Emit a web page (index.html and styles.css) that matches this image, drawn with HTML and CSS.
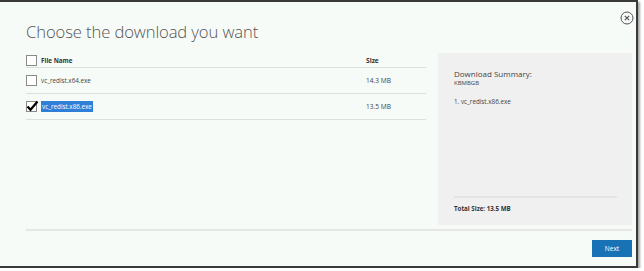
FILE: index.html
```html
<!DOCTYPE html>
<html>
<head>
<meta charset="utf-8">
<link rel="stylesheet" href="styles.css">
</head>
<body>
<div class="window">
  <div class="head">
    <h1 class="title">Choose the download you want</h1>
    <button class="close" aria-label="Close">
      <svg width="14" height="14" viewBox="0 0 14 14"><circle cx="7" cy="7" r="6" fill="none" stroke="#555" stroke-width="1"/><path d="M4.8 4.8 L9.2 9.2 M9.2 4.8 L4.8 9.2" stroke="#555" stroke-width="1.2" fill="none"/></svg>
    </button>
  </div>
  <div class="main">
    <div class="files">
      <div class="row header">
        <span class="cb"></span>
        <span class="name">File Name</span>
        <span class="size">Size</span>
      </div>
      <div class="row">
        <span class="cb"></span>
        <span class="name">vc_redist.x64.exe</span>
        <span class="size">14.3 MB</span>
      </div>
      <div class="row">
        <span class="cb checked"><svg width="13" height="12" viewBox="0 0 13 12"><path d="M1.5 6.5 L4.5 9.8 L11.5 1.5" fill="none" stroke="#000" stroke-width="2.2"/></svg></span>
        <span class="name"><span class="sel">vc_redist.x86.exe</span></span>
        <span class="size">13.5 MB</span>
      </div>
    </div>
    <div class="summary">
      <div class="sum-title">Download Summary:</div>
      <div class="sum-kb">KBMBGB</div>
      <div class="sum-item">1. vc_redist.x86.exe</div>
      <div class="sum-total">Total Size: 13.5 MB</div>
    </div>
  </div>
  <div class="footer">
    <button class="next">Next</button>
  </div>
</div>
</body>
</html>
```
FILE: styles.css
```css
html, body {
  margin: 0;
  padding: 0;
  background: #ffffff;
}
body {
  font-family: "Open Sans", "Noto Sans", sans-serif;
  color: #444;
}
.window {
  box-sizing: border-box;
  width: 638px;
  height: 268px;
  background: #f7fbf8;
  border-top: 2px solid #3a3a3a;
  border-right: 2px solid #3a3a3a;
  border-bottom: 2px solid #3a3a3a;
  box-shadow: 2px 2px 2px rgba(0,0,0,0.35);
  padding: 0 4px 0 26px;
  display: flex;
  flex-direction: column;
}
.head {
  display: flex;
  justify-content: space-between;
  align-items: flex-start;
  height: 51px;
}
.title {
  margin: 18px 0 0 0;
  font-weight: 300;
  font-size: 16.6px;
  line-height: 24px;
  color: #555;
  letter-spacing: -0.1px;
}
.close {
  margin: 9px -2px 0 0;
  padding: 0;
  border: none;
  background: none;
  width: 14px;
  height: 14px;
  display: block;
}
.close svg { display: block; }
.main {
  display: flex;
  gap: 12px;
  height: 172px;
}
.files {
  width: 400px;
}
.row {
  display: flex;
  align-items: center;
  height: 25px;
  border-bottom: 1px solid #dedede;
  font-size: 6.3px;
  color: #444;
}
.row.header {
  height: 14px;
  font-weight: 700;
  color: #333;
}
.cb {
  box-sizing: border-box;
  width: 11px;
  height: 11px;
  border: 1px solid #8a8a8a;
  background: #fff;
  position: relative;
  flex: none;
}
.cb svg {
  position: absolute;
  left: -1px;
  top: -2px;
}
.name {
  margin-left: 4px;
  width: 325px;
}
.sel {
  background: #2f7fd8;
  color: #fff;
  padding: 1px 1px;
}
.size {
  flex: 1;
  font-size: 6.6px;
}
.summary {
  box-sizing: border-box;
  width: 194px;
  height: 172px;
  background: #f0f0f0;
  padding: 15px 15px 0 16px;
  display: flex;
  flex-direction: column;
}
.sum-title {
  font-size: 8px;
  line-height: 11px;
  color: #444;
}
.sum-kb {
  font-size: 6px;
  line-height: 8px;
  color: #444;
}
.sum-item {
  margin-top: 10px;
  font-size: 6.3px;
  line-height: 9px;
  color: #444;
}
.sum-total {
  margin-top: auto;
  margin-bottom: 12px;
  border-top: 2px solid #e3e3e3;
  padding-top: 6px;
  font-size: 6.2px;
  line-height: 9px;
  font-weight: 700;
  color: #333;
}
.footer {
  margin-top: 4px;
  border-top: 2px solid #e6e6e6;
  display: flex;
  justify-content: flex-end;
  padding-top: 9px;
}
.next {
  width: 40px;
  height: 17px;
  border: none;
  background: #1a72b6;
  color: #fff;
  font-family: "Open Sans", sans-serif;
  font-size: 6.6px;
  padding: 0;
}
```
